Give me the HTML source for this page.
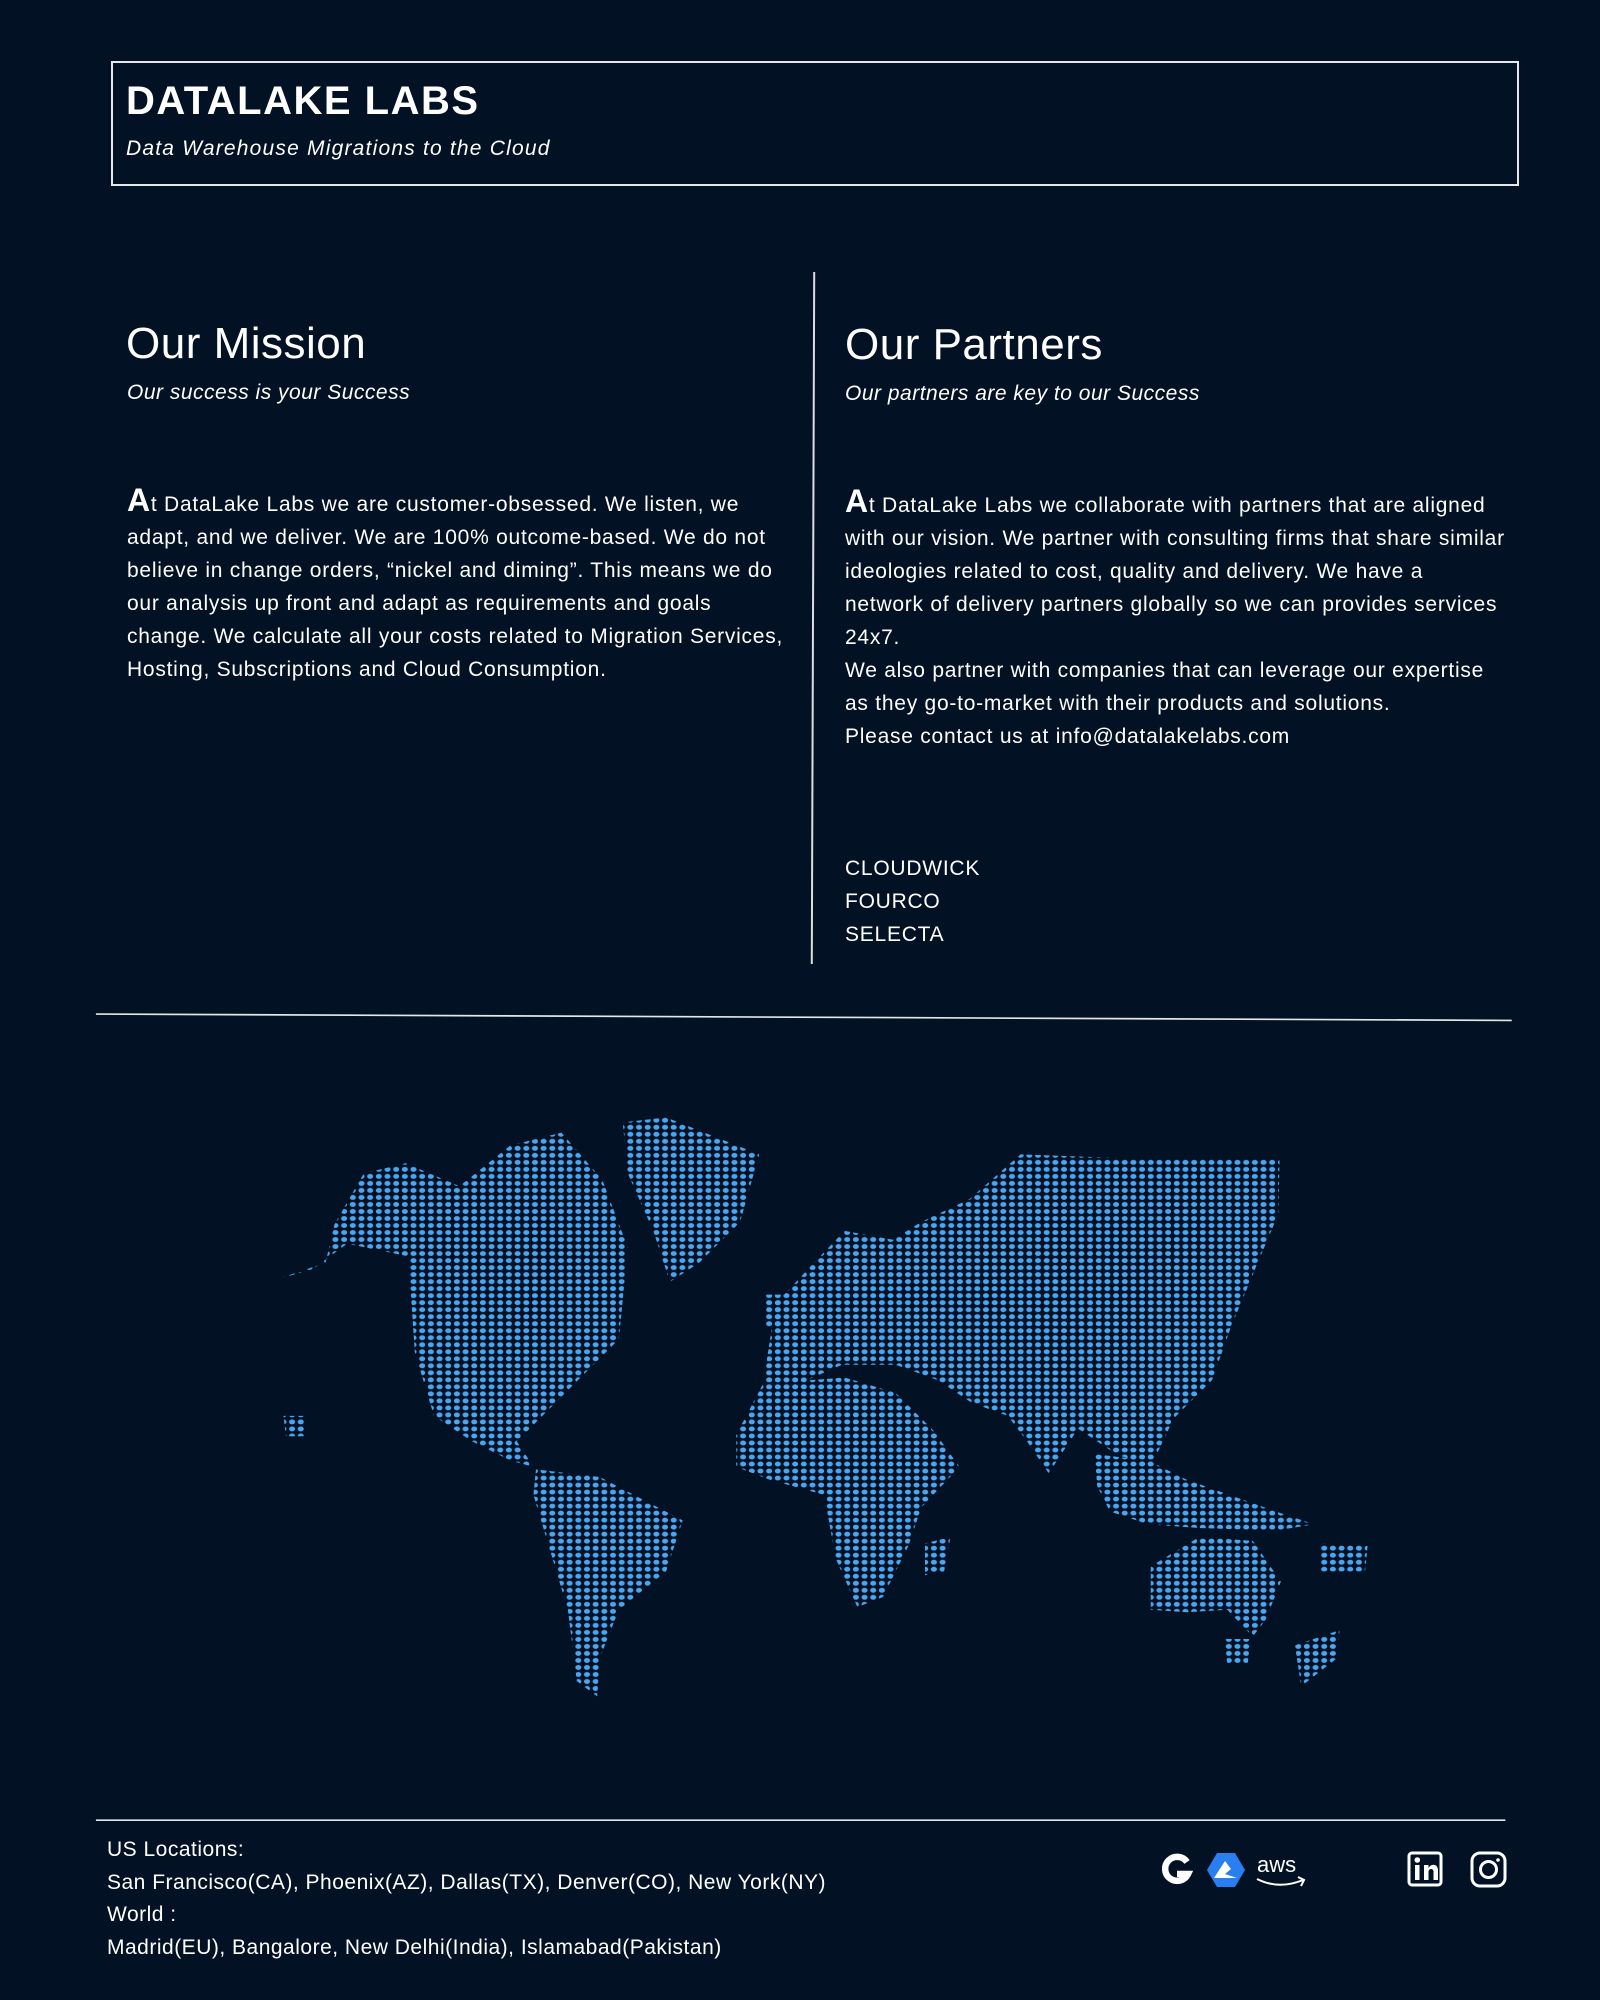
<!DOCTYPE html>
<html><head><meta charset="utf-8"><style>
html,body{margin:0;padding:0}
body{width:1600px;height:2000px;background:#021224;position:relative;overflow:hidden;font-family:"Liberation Sans",sans-serif;color:#fff}
.a{position:absolute;white-space:nowrap}
.box{position:absolute;left:111px;top:61px;width:1404px;height:121px;border:2px solid #e8e8e8}
h1{position:absolute;left:126px;top:79px;margin:0;font-size:40px;font-weight:bold;letter-spacing:1.5px}
.sub{font-style:italic;font-size:21px;letter-spacing:0.5px}
.h2{font-size:44px;letter-spacing:0.5px}
.p{font-size:21px;line-height:33px;letter-spacing:0.75px}
.big{font-size:32px;font-weight:bold;line-height:20px}
.f{font-size:21px;line-height:32.5px;letter-spacing:0.5px}
</style></head><body>
<div class="box"></div>
<h1>DATALAKE LABS</h1>
<div class="a sub" style="left:126px;top:137px;letter-spacing:1.2px">Data Warehouse Migrations to the Cloud</div>

<div class="a" style="left:812px;top:272px;width:2px;height:692px;background:#ddd;transform:rotate(0.2deg)"></div>

<div class="a h2" style="left:126px;top:319px">Our Mission</div>
<div class="a sub" style="left:127px;top:381px">Our success is your Success</div>
<div class="a p" style="left:127px;top:488px"><span class="big">A</span>t DataLake Labs we are customer-obsessed. We listen, we<br>adapt, and we deliver. We are 100% outcome-based. We do not<br>believe in change orders, “nickel and diming”. This means we do<br>our analysis up front and adapt as requirements and goals<br>change. We calculate all your costs related to Migration Services,<br>Hosting, Subscriptions and Cloud Consumption.</div>

<div class="a h2" style="left:845px;top:320px">Our Partners</div>
<div class="a sub" style="left:845px;top:382px">Our partners are key to our Success</div>
<div class="a p" style="left:845px;top:489px"><span class="big">A</span>t DataLake Labs we collaborate with partners that are aligned<br>with our vision. We partner with consulting firms that share similar<br>ideologies related to cost, quality and delivery. We have a<br>network of delivery partners globally so we can provides services<br>24x7.<br>We also partner with companies that can leverage our expertise<br>as they go-to-market with their products and solutions.<br>Please contact us at info@datalakelabs.com</div>
<div class="a p" style="left:845px;top:852px">CLOUDWICK<br>FOURCO<br>SELECTA</div>

<svg class="a" style="left:0;top:0" width="1600" height="2000" viewBox="0 0 1254 1568">
<line x1="75" y1="795" x2="1185" y2="800" stroke="#e6e6e6" stroke-width="1.3"/>
<line x1="75" y1="1427" x2="1180" y2="1427" stroke="#e6e6e6" stroke-width="1.3"/>
<defs><pattern id="d" patternUnits="userSpaceOnUse" x="1" y="1" width="6.8" height="5.5"><ellipse cx="3.4" cy="2.75" rx="2.35" ry="1.95" fill="#4aa6f0"/></pattern></defs>
<g fill="url(#d)">
<polygon points="217,1003 255,990 262,960 285,920 318,912 360,930 400,898 440,888 472,925 492,978 485,1050 445,1090 425,1110 405,1130 418,1150 400,1145 370,1130 340,1110 325,1060 320,985 272,975 245,995"/>
<polygon points="488,880 522,876 595,905 580,958 548,990 525,1005 512,965 492,920"/>
<polygon points="420,1152 470,1158 535,1192 522,1232 485,1262 470,1300 468,1330 452,1318 445,1262 430,1212 418,1172"/>
<polygon points="598,1085 608,1022 638,990 662,965 700,972 722,958 760,940 800,905 880,908 1003,908 1002,952 985,992 965,1040 950,1082 920,1112 902,1150 875,1140 845,1120 822,1155 805,1130 790,1110 762,1100 735,1082 702,1070 660,1070 630,1083"/>
<polygon points="577,1125 598,1085 662,1080 702,1092 732,1122 752,1150 722,1182 712,1212 692,1252 672,1260 655,1222 646,1172 603,1160 577,1150"/>
<polygon points="902,1228 940,1205 982,1208 1004,1240 992,1270 982,1283 962,1262 930,1264 902,1262"/>
<polygon points="858,1140 900,1145 930,1160 1000,1185 1030,1195 1000,1200 940,1198 900,1195 870,1185 860,1165"/>
<polygon points="1015,1290 1050,1278 1048,1300 1020,1322"/>
<polygon points="600,1015 615,1015 612,1040 600,1040"/>
<polygon points="725,1210 745,1205 740,1232 725,1235"/>
<polygon points="960,1285 980,1285 978,1305 962,1305"/>
<polygon points="222,1110 240,1110 238,1126 224,1126"/>
<polygon points="1035,1210 1072,1212 1070,1232 1035,1232"/>
</g>
</svg>

<div class="a f" style="left:107px;top:1834px">US Locations:<br>San Francisco(CA), Phoenix(AZ), Dallas(TX), Denver(CO), New York(NY)<br>World :<br>Madrid(EU), Bangalore, New Delhi(India), Islamabad(Pakistan)</div>

<svg class="a" style="left:1155px;top:1848px" width="380" height="50" viewBox="0 0 380 50">
<path d="M32 14 A12 12 0 1 0 33 26 L22 26" fill="none" stroke="#fff" stroke-width="6.5"/>
<polygon points="62,5 80,5 90,22 80,39 62,39 52,22" fill="#2a7ff0"/>
<polygon points="59,30 70,13 76,21 70,26 82,30" fill="#fff"/>
<text x="102" y="24" fill="#fff" font-family="Liberation Sans" font-size="22">aws</text>
<path d="M102 31 Q124 42 148 32 M143 29 L149 32 L146 38" fill="none" stroke="#fff" stroke-width="2"/>
<rect x="254" y="5" width="32" height="32" rx="3" fill="none" stroke="#fff" stroke-width="3"/>
<rect x="260" y="17" width="4.5" height="15" fill="#fff"/><circle cx="262.3" cy="12" r="2.8" fill="#fff"/>
<path d="M269 32 V17 H273.5 V20 Q276 16 280 17 Q283 18 283 23 V32 H278.5 V23 Q278 21 276 21 Q273.5 21 273.5 24 V32Z" fill="#fff"/>
<rect x="317" y="5" width="33" height="33" rx="8" fill="none" stroke="#fff" stroke-width="3"/>
<circle cx="333.5" cy="21.5" r="8" fill="none" stroke="#fff" stroke-width="3"/>
<circle cx="343" cy="12" r="1.8" fill="#fff"/>
</svg>
</body></html>
